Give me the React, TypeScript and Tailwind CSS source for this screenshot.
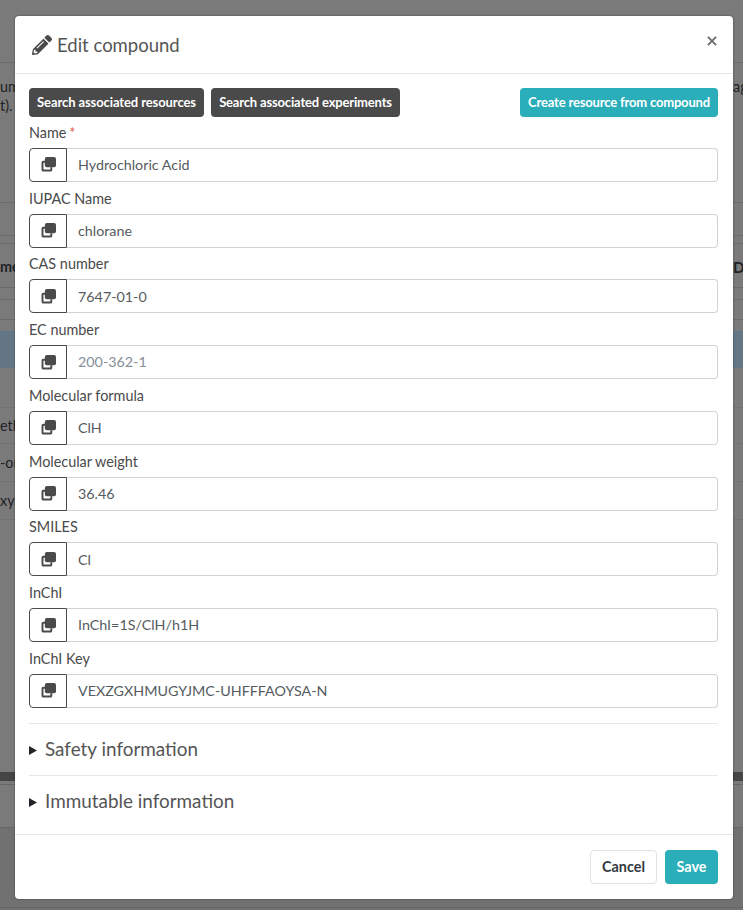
import React from "react";

function CloneIcon() {
  return (
    <svg width="15" height="15" viewBox="0 0 14 14" className="block">
      <path d="M5 3.6H2.2C1.2 3.6.5 4.3.5 5.2v6.6c0 1 .7 1.7 1.7 1.7h6.6c1 0 1.7-.7 1.7-1.7V9.6H8.7v2H2.3V5.3H5z" fill="#4a4a4a" />
      <rect x="3.6" y="0" width="10.4" height="9.6" rx="1.8" fill="#4a4a4a" />
    </svg>
  );
}

function Field({ label, value, required, placeholder }: { label: string; value: string; required?: boolean; placeholder?: boolean }) {
  return (
    <div>
      <div className="h-[16px] text-[14.4px] leading-[16px] text-[#4a4a4a]">
        {label}
        {required && <span className="ml-[3px] text-[#e05a4a]">*</span>}
      </div>
      <div className="mt-[7px] flex h-[34px]">
        <div className="flex w-[38px] shrink-0 items-center justify-center rounded-l-[4px] border border-[#4a4a4a] bg-white">
          <CloneIcon />
        </div>
        <div className={`flex flex-1 items-center rounded-r-[4px] border border-l-0 border-[#ced4da] pl-[11px] text-[14.3px] ${placeholder ? "text-[#868e96]" : "text-[#555b60]"}`}>
          {value}
        </div>
      </div>
    </div>
  );
}

function Section({ title }: { title: string }) {
  return (
    <div className="flex h-[52px] items-center border-t border-[#e4e6e9]">
      <svg width="8" height="9" viewBox="0 0 8 9" className="mt-[3px] shrink-0"><path d="M0 0l8 4.5L0 9z" fill="#212529" /></svg>
      <span className="mb-[1px] ml-[8px] text-[18.9px] leading-[24px] text-[#555]">{title}</span>
    </div>
  );
}

const fields = [
  { label: "Name", value: "Hydrochloric Acid", required: true },
  { label: "IUPAC Name", value: "chlorane" },
  { label: "CAS number", value: "7647-01-0" },
  { label: "EC number", value: "200-362-1", placeholder: true },
  { label: "Molecular formula", value: "ClH" },
  { label: "Molecular weight", value: "36.46" },
  { label: "SMILES", value: "Cl" },
  { label: "InChI", value: "InChI=1S/ClH/h1H" },
  { label: "InChI Key", value: "VEXZGXHMUGYJMC-UHFFFAOYSA-N" },
];

function Backdrop() {
  return (
    <div className="absolute inset-0 flex flex-col overflow-hidden text-[14.4px] text-[#1e2226]">
      <div className="h-[63px] border-b border-[#6b6b6b]" />
      <div className="flex h-[140px] border-b border-[#6b6b6b] pt-[14px] leading-[19px]">
        <div className="flex flex-col">
          <span>um</span>
          <span>t).</span>
        </div>
        <span className="ml-auto w-[10px] whitespace-nowrap">ag</span>
      </div>
      <div className="h-[33px] border-b border-[#6b6b6b]" />
      <div className="h-[8px] border-b border-[#6b6b6b]" />
      <div className="flex h-[44px] border-b border-[#6b6b6b] pt-[15px] font-bold leading-[16px]">
        <span>me</span>
        <span className="ml-auto w-[10px] text-[15px]">D</span>
      </div>
      <div className="h-[12px] border-b border-[#6b6b6b]" />
      <div className="h-[20px] border-b border-[#6b6b6b]" />
      <div className="h-[11px]" />
      <div className="h-[37px] bg-[#637686]" />
      <div className="h-[40px] border-b border-[#727272]" />
      <div className="flex h-[36px] items-center border-b border-[#727272]"><span>eth</span></div>
      <div className="flex h-[38px] items-center border-b border-[#727272]"><span>-or</span></div>
      <div className="flex h-[38px] items-center border-b border-[#727272]"><span>xyb</span></div>
      <div className="h-[252px]" />
      <div className="h-[9px] bg-[#454545]" />
      <div className="h-[4px] border-b border-[#666]" />
      <div className="h-[43px] border-b border-[#666]" />
      <div className="flex-1 bg-[#717171]">
        <div className="h-[80px] border-b border-[#666]" />
      </div>
    </div>
  );
}

export default function App() {
  return (
    <div className="relative h-[910px] w-[743px] overflow-hidden bg-[#7a7a7a] pt-[16px] [font-family:Lato,'Liberation_Sans',sans-serif]">
      <Backdrop />
      <div className="relative ml-[15px] h-[883px] w-[718px] rounded-[4px] bg-white shadow-[0_0_2px_rgba(0,0,0,0.5)]">
        <div className="flex h-[58px] items-center justify-between border-b border-[#e4e6e9] pl-[17px] pr-[16px]">
          <div className="flex items-center gap-[5px]">
            <svg width="20" height="20" viewBox="0 0 512 512" fill="#4a4a4a"><path d="M497.9 142.1l-46.1 46.1c-4.7 4.7-12.3 4.7-17 0l-111-111c-4.7-4.7-4.7-12.3 0-17l46.1-46.1c18.7-18.7 49.1-18.7 67.900 0l60.100 60.100c18.800 18.700 18.800 49.100 0 67.900zM284.200 99.800L21.600 362.400.400 483.900c-2.900 16.400 11.400 30.600 27.800 27.800l121.500-21.300 262.600-262.600c4.700-4.700 4.700-12.300 0-17l-111-111c-4.800-4.700-12.400-4.700-17.100 0zM124.100 339.900c-5.500-5.500-5.500-14.300 0-19.800l154-154c5.500-5.500 14.300-5.500 19.800 0s5.500 14.300 0 19.800l-154 154c-5.500 5.500-14.300 5.500-19.800 0zM88 424h48v36.300l-64.500 11.300-31.100-31.100L51.700 376H88v48z" /></svg>
            <span className="mt-[1px] text-[18.5px] leading-[24px] text-[#555]">Edit compound</span>
          </div>
          <svg width="10" height="10" viewBox="0 0 11 11" className="mb-[8px]"><path d="M1 1l9 9M10 1l-9 9" stroke="#6f6f6f" strokeWidth="2.2" /></svg>
        </div>

        <div className="pl-[14px] pr-[15px] pt-[14px]">
          <div className="flex justify-between">
            <div className="flex gap-[7px]">
              <div className="flex h-[29px] w-[175px] items-center justify-center rounded-[4px] bg-[#4a4a4a] text-[13px] font-bold tracking-[-0.1px] text-white">Search associated resources</div>
              <div className="flex h-[29px] w-[189px] items-center justify-center rounded-[4px] bg-[#4a4a4a] text-[13px] font-bold tracking-[-0.17px] text-white">Search associated experiments</div>
            </div>
            <div className="flex h-[29px] w-[198px] items-center justify-center rounded-[4px] bg-[#2aaeb9] text-[13px] font-bold tracking-[-0.17px] text-white">Create resource from compound</div>
          </div>
          <div className="mt-[7.9px] flex flex-col gap-[8.75px]">
            {fields.map((f) => <Field key={f.label} {...f} />)}
          </div>
          <div className="mt-[15px]">
            <Section title="Safety information" />
            <Section title="Immutable information" />
          </div>
        </div>

        <div className="mt-[7px] flex h-[65px] items-center justify-end gap-[8px] border-t border-[#e4e6e9] pr-[15px]">
          <div className="flex h-[34px] w-[67px] items-center justify-center rounded-[4px] border border-[#dee2e6] text-[14.4px] font-bold text-[#343a40]">Cancel</div>
          <div className="flex h-[34px] w-[53px] items-center justify-center rounded-[4px] bg-[#2aaeb9] text-[14.4px] font-bold text-white">Save</div>
        </div>
      </div>
    </div>
  );
}
